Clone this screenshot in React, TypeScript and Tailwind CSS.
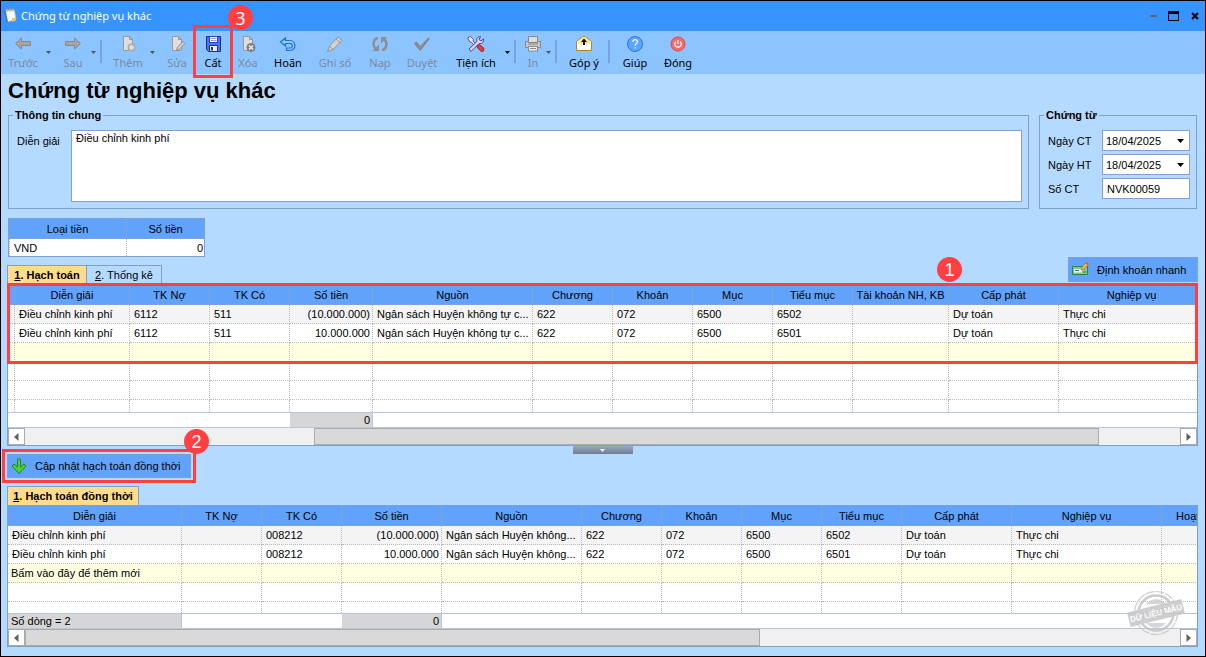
import type { ReactNode } from 'react'
import clsx from 'clsx'

type Column = { label: string; width: number; align?: 'right' }

type GridProps = {
  columns: Column[]
  rows: string[][]
  newRowText?: string
  blankRows: number
  lastRow: string
  footer: (string | null)[]
  scrollbar: ReactNode
}

const entryColumns: Column[] = [
  { label: '', width: 7 },
  { label: 'Diễn giải', width: 115 },
  { label: 'TK Nợ', width: 80 },
  { label: 'TK Có', width: 80 },
  { label: 'Số tiền', width: 83, align: 'right' },
  { label: 'Nguồn', width: 160 },
  { label: 'Chương', width: 80 },
  { label: 'Khoản', width: 80 },
  { label: 'Mục', width: 80 },
  { label: 'Tiểu mục', width: 80 },
  { label: 'Tài khoản NH, KB', width: 96 },
  { label: 'Cấp phát', width: 110 },
  { label: 'Nghiệp vụ', width: 146 },
]

const entryRows = [
  ['', 'Điều chỉnh kinh phí', '6112', '511', '(10.000.000)', 'Ngân sách Huyện không tự c...', '622', '072', '6500', '6502', '', 'Dự toán', 'Thực chi'],
  ['', 'Điều chỉnh kinh phí', '6112', '511', '10.000.000', 'Ngân sách Huyện không tự c...', '622', '072', '6500', '6501', '', 'Dự toán', 'Thực chi'],
]

const parallelColumns: Column[] = [
  { label: 'Diễn giải', width: 174 },
  { label: 'TK Nợ', width: 80 },
  { label: 'TK Có', width: 80 },
  { label: 'Số tiền', width: 100, align: 'right' },
  { label: 'Nguồn', width: 140 },
  { label: 'Chương', width: 80 },
  { label: 'Khoản', width: 80 },
  { label: 'Mục', width: 80 },
  { label: 'Tiểu mục', width: 80 },
  { label: 'Cấp phát', width: 110 },
  { label: 'Nghiệp vụ', width: 150 },
  { label: 'Hoạt động', width: 80 },
]

const parallelRows = [
  ['Điều chỉnh kinh phí', '', '008212', '(10.000.000)', 'Ngân sách Huyện không...', '622', '072', '6500', '6502', 'Dự toán', 'Thực chi', ''],
  ['Điều chỉnh kinh phí', '', '008212', '10.000.000', 'Ngân sách Huyện không...', '622', '072', '6500', '6501', 'Dự toán', 'Thực chi', ''],
]

function Badge({ children, className }: { children: ReactNode; className: string }) {
  return (
    <span
      className={clsx(
        'absolute z-20 flex size-[25px] items-center justify-center rounded-full bg-[#fe4042] text-[18px] leading-none text-white',
        className,
      )}
    >
      {children}
    </span>
  )
}

function Grid({ columns, rows, newRowText = '', blankRows, lastRow, footer, scrollbar }: GridProps) {
  const total = columns.reduce((sum, c) => sum + c.width, 0)
  const cell = 'overflow-hidden border-r border-b border-dotted border-[#b9b9b9] py-0 whitespace-nowrap'

  return (
    <div className="overflow-hidden border border-[#7da0d0] bg-white">
      <div className="overflow-hidden">
        <table className="table-fixed border-separate border-spacing-0" style={{ width: total }}>
          <colgroup>
            {columns.map((c, i) => (
              <col key={i} style={{ width: c.width }} />
            ))}
          </colgroup>
          <thead>
            <tr className="h-5 bg-[#61a2fb]">
              {columns.map((c, i) => (
                <th key={i} className="border-r border-b border-[#7fa3d3] p-0 font-normal whitespace-nowrap">
                  {c.label}
                </th>
              ))}
            </tr>
          </thead>
          <tbody>
            {rows.map((row, r) => (
              <tr key={r} className={clsx('h-[19px]', r % 2 === 0 ? 'bg-[#f4f4f4]' : 'bg-white')}>
                {row.map((value, i) => (
                  <td key={i} className={clsx(cell, columns[i].align === 'right' ? 'pr-0.5 text-right' : 'pl-1')}>
                    {value}
                  </td>
                ))}
              </tr>
            ))}
            <tr className="h-[19px] bg-[#ffffe1]">
              {columns.map((_, i) => (
                <td key={i} className={clsx(cell, 'pl-[3px]')}>
                  {i === 0 ? newRowText : ''}
                </td>
              ))}
            </tr>
            {Array.from({ length: blankRows }, (_, r) => (
              <tr key={r} className="h-[19px]">
                {columns.map((_, i) => (
                  <td key={i} className={cell} />
                ))}
              </tr>
            ))}
            <tr className={lastRow}>
              {columns.map((_, i) => (
                <td key={i} className="border-r border-dotted border-[#b9b9b9] p-0" />
              ))}
            </tr>
          </tbody>
          <tfoot>
            <tr className="h-4">
              {footer.map((value, i) => (
                <td
                  key={i}
                  className={clsx(
                    'border-y border-[#b5c7dc] py-0 pr-0.5 pl-[3px] leading-[14px]',
                    value !== null && 'border-r bg-[#d6d6d6]',
                    columns[i].align === 'right' && 'text-right',
                  )}
                >
                  {value}
                </td>
              ))}
            </tr>
          </tfoot>
        </table>
      </div>
      {scrollbar}
    </div>
  )
}

function Scrollbar({ before, thumb }: { before: string; thumb: string }) {
  const button = 'flex w-[17px] shrink-0 items-center justify-center border border-[#ababab] bg-white'
  return (
    <div className="flex h-[17px] bg-[#f0f0f0]">
      <button type="button" aria-label="Cuộn trái" className={button}>
        <svg width="5" height="8" viewBox="0 0 5 8"><path d="M4.5 0v8L0 4z" fill="#606060" /></svg>
      </button>
      <div className="flex flex-1">
        <div className={before} />
        <div className={clsx('border border-[#ababab] bg-[#d9d9d9]', thumb)} />
      </div>
      <button type="button" aria-label="Cuộn phải" className={button}>
        <svg width="5" height="8" viewBox="0 0 5 8"><path d="M.5 0v8L5 4z" fill="#606060" /></svg>
      </button>
    </div>
  )
}

function Tool({ label, icon, className, disabled, children }: {
  label: string
  icon: ReactNode
  className: string
  disabled?: boolean
  children?: ReactNode
}) {
  return (
    <div className={clsx('relative shrink-0', className)}>
      <button
        type="button"
        disabled={disabled}
        className={clsx('flex w-full flex-col items-center pt-1', disabled ? 'text-[#7b8a9c]' : 'text-black')}
      >
        <svg width="18" height="18" viewBox="0 0 18 18" fill="none">{icon}</svg>
        <span className="text-[11px] leading-5 whitespace-nowrap">{label}</span>
      </button>
      {children}
    </div>
  )
}

function Caret({ label, disabled }: { label: string; disabled?: boolean }) {
  return (
    <button type="button" aria-label={label} disabled={disabled} className="flex w-2 shrink-0 items-center justify-center">
      <svg width="5" height="3" viewBox="0 0 5 3"><path d="M0 0h5L2.500 3z" fill={disabled ? '#555' : '#000'} /></svg>
    </button>
  )
}

function Separator() {
  return <div className="mt-[9px] mr-1.5 ml-[3px] h-[23px] w-0.5 shrink-0 bg-[#77a3dc]" />
}

const page = <path d="M4.500 1.500h6l3 3v11h-9z M10.500 1.500v3h3" fill="#dedede" stroke="#999" />

function DateField({ id, label }: { id: string; label: string }) {
  return (
    <div className="flex h-[21px] items-center">
      <label htmlFor={id} className="w-[54px]">{label}</label>
      <div className="flex h-full flex-1 border border-[#869fdb] bg-white">
        <input id={id} defaultValue="18/04/2025" className="w-0 flex-1 pl-[3px] outline-none" />
        <button type="button" aria-label={`Chọn ${label}`} className="flex w-[18px] items-center justify-center">
          <svg width="7" height="4" viewBox="0 0 7 4"><path d="M0 0h7L3.500 4z" fill="#000" /></svg>
        </button>
      </div>
    </div>
  )
}

function TitleBar() {
  return (
    <header className="flex h-[30px] items-center bg-[#3794ff] pr-1.5 pl-0.5 font-['Noto_Sans','Open_Sans',sans-serif] text-white">
      <svg width="14" height="16" viewBox="0 0 14 16">
        <path d="M2.500 2.500l9-.5 1.500 9.500-8.500 2.500z" fill="#f6fbff" stroke="#88b4e6" strokeWidth=".6" />
        <path d="M.5 3l2-.5 2.500 11.500-1.500.5z" fill="#4779c4" />
        <path d="M9 10.500l4-1v3l-4 1.500z" fill="#efc34d" />
        <path d="M4 1v3M7 .8v3M10 .5v3" stroke="#e5b33c" strokeWidth="1.400" />
      </svg>
      <h2 className="ml-1 flex-1 text-[11px] leading-4">Chứng từ nghiệp vụ khác</h2>
      <div className="flex items-center gap-2.5">
        <button type="button" aria-label="Thu nhỏ">
          <svg width="8" height="10" viewBox="0 0 8 10"><path d="M0 4h7v2H0z" fill="#5d6670" /></svg>
        </button>
        <button type="button" aria-label="Phóng to">
          <svg width="11" height="10" viewBox="0 0 11 10"><path d="M.5 1.500h10v8H.5z" fill="none" stroke="#000" /><path d="M0 0h11v3H0z" /></svg>
        </button>
        <button type="button" aria-label="Đóng cửa sổ" className="ml-0.5">
          <svg width="8" height="8" viewBox="0 0 8 8"><path d="M1 1l6 6M7 1L1 7" stroke="#000" strokeWidth="2" /></svg>
        </button>
      </div>
    </header>
  )
}

function Toolbar() {
  return (
    <nav className="flex h-[43px] bg-[#8bc4ff] pl-px font-['Noto_Sans','Open_Sans',sans-serif]">
      <Tool disabled label="Trước" className="w-[42px]" icon={<path d="M1.500 8.500l6-5.500v3.500h9v4h-9V14z" fill="#a5a5a5" stroke="#888" />} />
      <Caret disabled label="Các chứng từ trước" />
      <Tool disabled label="Sau" className="ml-[5px] w-8" icon={<path d="M16.500 8.500l-6-5.500v3.500h-9v4h9V14z" fill="#a5a5a5" stroke="#888" />} />
      <Caret disabled label="Các chứng từ sau" />
      <Separator />
      <Tool disabled label="Thêm" className="w-10" icon={<>{page}<circle cx="12.500" cy="12.500" r="3.200" fill="#ddd" stroke="#aaa" strokeWidth="1.500" /></>} />
      <Caret disabled label="Tùy chọn thêm" />
      <Tool disabled label="Sửa" className="ml-0.5 w-[38px]" icon={<>{page}<path d="M8.500 15.500l.8-3 5.500-6 2 2-5.500 6z" fill="#d0d0d0" stroke="#8d8d8d" /></>} />
      <Tool
        label="Cất"
        className="w-[34px]"
        icon={
          <>
            <path d="M2.500 1.500h14v15h-12l-2-2z" fill="#4a74f0" stroke="#1a2f9c" />
            <path d="M5.500 1.500h8v6h-8z" fill="#fff" stroke="#2947b8" />
            <path d="M6.500 3.500h6M6.500 5.500h6" stroke="#8ca0dc" />
            <path d="M5.500 10.500h8v6h-8z" fill="#e8ecf8" stroke="#1a2f9c" />
            <path d="M7 12h2v3.500H7z" fill="#24389c" />
          </>
        }
      >
        <span className="pointer-events-none absolute -top-[6px] -left-[3px] z-10 h-[53px] w-10 border-3 border-[#fe4042]" />
        <Badge className="-top-[26px] left-8">3</Badge>
      </Tool>
      <Tool disabled label="Xóa" className="w-9" icon={<>{page}<circle cx="12" cy="12.500" r="4.500" fill="#808080" /><path d="M10 10.500l4 4M14 10.500l-4 4" stroke="#eee" strokeWidth="1.500" /></>} />
      <Tool label="Hoãn" className="w-11" icon={<path d="M1.500 7l5-4v2.500h4.500c6 0 7 10 0 10H7.500v-2.500H11c3.200 0 3-4.500 0-4.500H6.500V11z" fill="#8fc8ff" stroke="#1f6fd6" strokeWidth="1.200" />} />
      <Tool disabled label="Ghi sổ" className="w-[50px]" icon={<><path d="M1.500 16.500l2-5.500 8.500-9 4 3.500-9 9z" fill="#d2d2d2" stroke="#929292" /><path d="M3.500 11l3.500 3.500M10 4l4 3.500" stroke="#929292" /></>} />
      <Tool disabled label="Nạp" className="w-10" icon={<><path d="M7 3C1.500 4 1.500 11 5 14M11 15c5.500-1 5.500-8 2-11" stroke="#8f8f8f" strokeWidth="2.500" /><path d="M1.500 16H8V9.500zM16.500 2H10v6.500z" fill="#8f8f8f" /></>} />
      <Tool disabled label="Duyệt" className="w-11" icon={<path d="M1.500 8.500l2-1.500 3.800 4.500L15.500 3l.8.5-9 12z" fill="#8d8d8d" stroke="#818181" />} />
      <Tool
        label="Tiện ích"
        className="ml-[5px] w-[54px]"
        icon={
          <>
            <path d="M1.500 2l2-.5 3 3-.5 1.500 4.500 4.500-1.500 1.500L4.500 7.500 3 7 1 4z" fill="#e7e5ff" stroke="#5a54a5" />
            <path d="M10.500 10.500l2-1 4.500 4-.5 2.500-2.500.5-4-4.500z" fill="#e83c3c" stroke="#a82020" />
            <path d="M13.500 1.500c-3 0-4.500 2.500-3.500 5l-8 7.500 2 2.500L12 8.500c3 .8 5-1.500 4.500-4.500L14 6l-2-1.500z" fill="#dedcff" stroke="#4d3fa2" />
          </>
        }
      />
      <Caret label="Danh sách tiện ích" />
      <Separator />
      <Tool
        disabled
        label="In"
        className="w-[22px]"
        icon={
          <>
            <path d="M1.500 6.500h15v6h-15z" fill="#c8c8c8" stroke="#888" />
            <path d="M4.500 1.500h9v6h-9z" fill="#ddd" stroke="#888" />
            <path d="M4.500 11.500h9v4.500h-9z" fill="#eee" stroke="#888" />
            <path d="M6 13.500h6M4 9h10" stroke="#888" />
          </>
        }
      />
      <Caret disabled label="Tùy chọn in" />
      <Separator />
      <Tool
        label="Góp ý"
        className="w-[42px]"
        icon={
          <>
            <path d="M1.500 6.500L9 1l7.500 5.500v9h-15z" fill="#fff" stroke="#b5871f" />
            <path d="M2 6.500L9 1.500l7 5-3 3H5z" fill="#fbe693" />
            <path d="M9 3.500l3 3.500h-2v3H8V7H6z" fill="#111" />
          </>
        }
      />
      <Separator />
      <Tool
        label="Giúp"
        className="w-[38px]"
        icon={
          <>
            <circle cx="9" cy="9" r="7.500" fill="#58a6ff" stroke="#2c73d8" />
            <path d="M6.800 7c0-3.200 4.700-3 4.700-.3 0 1.800-2.400 1.900-2.400 4M9.100 12.200v1.400" stroke="#fff" strokeWidth="1.300" />
          </>
        }
      />
      <Tool
        label="Đóng"
        className="w-12"
        icon={
          <>
            <circle cx="9" cy="9" r="7" fill="#f56b6b" stroke="#e04646" />
            <path d="M6.800 6.700a3.200 3.200 0 1 0 4.400 0M9 5v4" stroke="#fff" strokeWidth="1.200" />
          </>
        }
      />
    </nav>
  )
}

// Con dấu "dữ liệu mẫu" đặt đè lên góc lưới
function Stamp() {
  return (
    <svg className="pointer-events-none absolute right-[13px] bottom-[11px]" width="58" height="46" viewBox="0 0 58 46">
      <g opacity=".85">
        <circle cx="29" cy="23" r="21.500" fill="none" stroke="#c4c4c4" strokeWidth="1.200" strokeDasharray="9 1" />
        <circle cx="29" cy="23" r="17.500" fill="none" stroke="#c4c4c4" strokeWidth="2.500" />
        <path d="M19 14a13 13 0 0 1 20 0zM19 33a13 13 0 0 0 20 0z" fill="#cfcfcf" />
        <g transform="rotate(-14 29 23)">
          <path d="M1 15.500h56v15H1z" fill="#c6c6c6" />
          <text x="29" y="26" textAnchor="middle" fontSize="8" fontWeight="700" fill="#fff">DỮ LIỆU MẪU</text>
        </g>
      </g>
    </svg>
  )
}

export default function App() {
  return (
    <div className="min-h-screen border border-black bg-[#b5daff] font-['Liberation_Sans',Arial,sans-serif] text-[11px] leading-[14px] text-black">
      <TitleBar />
      <Toolbar />

      <main className="pr-[7px] pb-[9px] pl-1.5">
        <div className="px-px">
          <h1 className="text-[22px] leading-[34px] font-bold">Chứng từ nghiệp vụ khác</h1>

          <div className="flex gap-2.5">
            <fieldset className="flex-1 border border-[#7da0d0] pr-1.5 pb-1.5 pl-2">
              <legend className="-ml-1 px-0.5 font-bold">Thông tin chung</legend>
              <div className="flex pt-2">
                <label htmlFor="description" className="w-[54px] pt-1">Diễn giải</label>
                <textarea
                  id="description"
                  defaultValue="Điều chỉnh kinh phí"
                  className="h-[72px] flex-1 resize-none border border-[#869fdb] bg-white px-1 outline-none"
                />
              </div>
            </fieldset>

            <fieldset className="w-[158px] border border-[#7da0d0] pr-1.5 pl-2">
              <legend className="-ml-1 px-0.5 font-bold">Chứng từ</legend>
              <div className="flex flex-col gap-[3px] pt-2">
                <DateField id="doc-date" label="Ngày CT" />
                <DateField id="post-date" label="Ngày HT" />
                <div className="flex h-[21px] items-center">
                  <label htmlFor="doc-no" className="w-[54px]">Số CT</label>
                  <input id="doc-no" defaultValue="NVK00059" className="h-full w-0 flex-1 border border-[#869fdb] bg-white pl-1 outline-none" />
                </div>
              </div>
            </fieldset>
          </div>

          <table className="mt-[9px] w-[197px] table-fixed border-separate border-spacing-0 border border-[#7da0d0] bg-white">
            <thead>
              <tr className="h-5 bg-[#61a2fb]">
                <th className="w-[118px] border-r border-b border-[#7fa3d3] p-0 font-normal">Loại tiền</th>
                <th className="border-b border-[#7fa3d3] p-0 font-normal">Số tiền</th>
              </tr>
            </thead>
            <tbody>
              <tr className="h-[17px]">
                <td className="border-x border-dotted border-[#b9b9b9] px-1 py-0">VND</td>
                <td className="py-0 pr-px text-right">0</td>
              </tr>
            </tbody>
          </table>
        </div>

        <div className="flex items-end">
          <div role="tablist" className="flex flex-1 items-end">
            <button type="button" role="tab" aria-selected="true" className="h-[19px] w-20 border border-b-0 border-[#7da0d0] bg-[#ffdc8c] font-bold whitespace-nowrap">
              <u>1</u>. Hạch toán
            </button>
            <button type="button" role="tab" aria-selected="false" className="h-[19px] w-[75px] border border-b-0 border-l-0 border-[#7da0d0] whitespace-nowrap">
              <u>2</u>. Thống kê
            </button>
          </div>
          <button type="button" className="mb-0.5 flex h-[25px] w-[130px] items-center gap-2 border border-[#7da0d0] bg-[#61a2fb] pl-[3px] whitespace-nowrap">
            <svg width="17" height="16" viewBox="0 0 17 16">
              <path d="M.5 4.500h15v8H.5z" fill="#7fc796" stroke="#2f8050" />
              <path d="M2 7h8v3.500H2z" fill="#e5f6e8" />
              <path d="M3 8.500h4M11 10h3" stroke="#2f8050" />
              <path d="M9 8l1-3 4.500-4.500 2 1.500L12 7z" fill="#f5bd50" stroke="#a76a28" strokeWidth=".7" />
              <path d="M14.500.5l2 1.500-1 1-2-1.500z" fill="#e1524a" />
            </svg>
            Định khoản nhanh
          </button>
        </div>

        <section className="relative">
          <Grid
            columns={entryColumns}
            rows={entryRows}
            blankRows={2}
            lastRow="h-3"
            footer={[null, null, null, null, '0', null, null, null, null, null, null, null, null]}
            scrollbar={<Scrollbar before="w-1/4" thumb="w-[68%]" />}
          />
          <div className="pointer-events-none absolute inset-x-0 -top-px h-[81px] border-3 border-[#fe4042]" />
          <Badge className="-top-[27px] right-[236px]">1</Badge>
        </section>

        <button type="button" aria-label="Thu gọn" className="mx-auto flex h-2 w-[60px] items-center justify-center bg-linear-to-b from-[#9aa9c0] to-[#6f7c90]">
          <svg width="5" height="3" viewBox="0 0 5 3"><path d="M0 0h5L2.500 3z" fill="#fff" /></svg>
        </button>

        <div className="relative w-fit">
          <button type="button" className="flex h-6 w-[184px] items-center gap-2 border border-[#7da0d0] bg-[#61a2fb] pl-[3px] whitespace-nowrap">
            <svg width="16" height="16" viewBox="0 0 16 16">
              <path d="M6.500 1h3v8l3.500-3 2 2-7 7.500L1 8l2-2 3.500 3z" fill="#4fd035" stroke="#1c8a1c" strokeLinejoin="round" />
            </svg>
            Cập nhật hạch toán đồng thời
          </button>
          <div className="pointer-events-none absolute -inset-[5px] border-3 border-[#fe4042]" />
          <Badge className="-top-[25px] left-[177px]">2</Badge>
        </div>

        <div role="tablist" className="relative mt-2 -mb-px flex">
          <button type="button" role="tab" aria-selected="true" className="h-5 w-[132px] border border-b-0 border-[#7da0d0] bg-[#ffdc8c] pb-px font-bold whitespace-nowrap">
            <u>1</u>. Hạch toán đồng thời
          </button>
        </div>

        <section className="relative">
          <Grid
            columns={parallelColumns}
            rows={parallelRows}
            newRowText="Bấm vào đây để thêm mới"
            blankRows={1}
            lastRow="h-[11px]"
            footer={['Số dòng = 2', null, null, '0', null, null, null, null, null, null, null, null]}
            scrollbar={<Scrollbar before="w-0" thumb="w-7/11" />}
          />
          <Stamp />
        </section>
      </main>
    </div>
  )
}
